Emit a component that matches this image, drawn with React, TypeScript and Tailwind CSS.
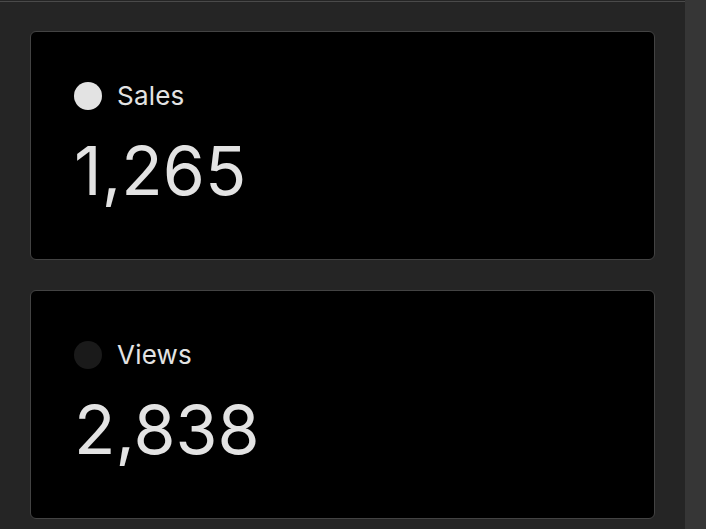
const stats = [
  { label: "Sales", value: "1,265", dot: "bg-[#e3e3e3]" },
  { label: "Views", value: "2,838", dot: "bg-[#1a1a1a]" },
];

const App = () => {
  return (
    <div
      className="flex h-[529px] w-full bg-[#252525] overflow-hidden"
      style={{ fontFamily: "Inter, 'Helvetica Neue', Arial, sans-serif" }}
    >
      <div className="flex-1 mt-px border-t border-[#4a4a4a] pl-[30px] pr-[30px] pt-[29px] flex flex-col gap-[30px]">
        {stats.map((s) => (
          <div
            key={s.label}
            className="h-[229px] rounded-[6px] border border-[#434343] bg-black pl-[43px] pt-[50px]"
          >
            <div className="flex items-center gap-[15px] h-[28px]">
              <div className={`w-[28px] h-[28px] rounded-full ${s.dot}`} />
              <span className="text-[26px] leading-none text-[#e3e3e3] tracking-[0.2px]">{s.label}</span>
            </div>
            <div className="mt-[26px] text-[68px] leading-none text-[#e3e3e3]">
              {s.value}
            </div>
          </div>
        ))}
      </div>
      <div className="w-[21px] bg-[#363636]" />
    </div>
  );
};

export default App;
